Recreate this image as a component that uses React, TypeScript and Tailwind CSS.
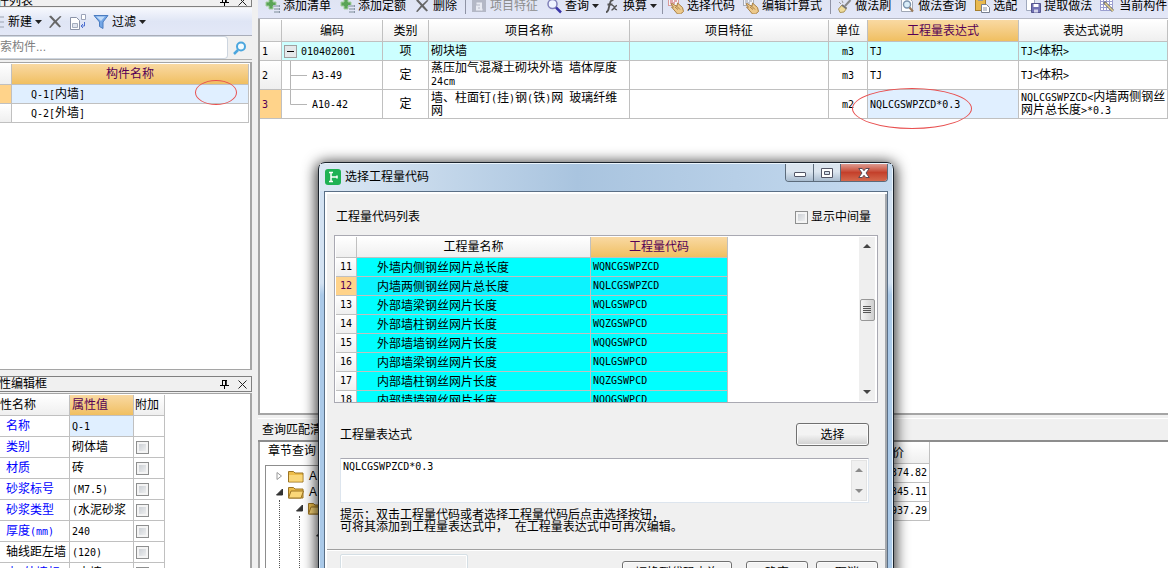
import type { ReactNode } from "react";

const CJK = "font-['Liberation_Sans','Noto_Sans_CJK_SC',sans-serif]";
const MONO = "font-['DejaVu_Sans_Mono',monospace] text-[10px]";
const LINE = "border-[#c0c0c0]";
const HEAD = "bg-gradient-to-b from-white to-[#efefef] font-normal";
const GOLD = "bg-gradient-to-b from-[#f9d9a2] to-[#f0bf60] font-normal text-[#550055]";

const items = [
  { no: "1", code: "010402001", kind: "项", name: "砌块墙", unit: "m3", expr: "TJ", note: "TJ<体积>" },
  { no: "2", code: "A3-49", kind: "定", name: "蒸压加气混凝土砌块外墙 墙体厚度\n24cm", unit: "m3", expr: "TJ", note: "TJ<体积>" },
  {
    no: "3",
    code: "A10-42",
    kind: "定",
    name: "墙、柱面钉(挂)钢(铁)网 玻璃纤维\n网",
    unit: "m2",
    expr: "NQLCGSWPZCD*0.3",
    note: "NQLCGSWPZCD<内墙两侧钢丝\n网片总长度>*0.3",
  },
];

const props = [
  { name: "名称", value: "Q-1", blue: true, check: false },
  { name: "类别", value: "砌体墙", blue: true, check: true },
  { name: "材质", value: "砖", blue: true, check: true },
  { name: "砂浆标号", value: "(M7.5)", blue: true, check: true },
  { name: "砂浆类型", value: "(水泥砂浆", blue: true, check: true },
  { name: "厚度(mm)", value: "240", blue: true, check: true },
  { name: "轴线距左墙", value: "(120)", blue: false, check: true },
  { name: "内/外墙标", value: "(内墙)", blue: true, check: true },
];

const codes = [
  ["11", "外墙内侧钢丝网片总长度", "WQNCGSWPZCD"],
  ["12", "内墙两侧钢丝网片总长度", "NQLCGSWPZCD"],
  ["13", "外部墙梁钢丝网片长度", "WQLGSWPCD"],
  ["14", "外部墙柱钢丝网片长度", "WQZGSWPCD"],
  ["15", "外部墙墙钢丝网片长度", "WQQGSWPCD"],
  ["16", "内部墙梁钢丝网片长度", "NQLGSWPCD"],
  ["17", "内部墙柱钢丝网片长度", "NQZGSWPCD"],
  ["18", "内部墙墙钢丝网片长度", "NQQGSWPCD"],
];

// Half-width runs are set in the fixed-pitch face, the rest in the CJK one
const Mixed = ({ text }: { text: string }) => (
  <span className="whitespace-pre">
    {text.split(/([\x20-\x7e]+)/).map((part, i) =>
      i % 2 ? (
        <span key={i} className={MONO}>
          {part}
        </span>
      ) : (
        part
      )
    )}
  </span>
);

const Icon = ({ children }: { children: ReactNode }) => (
  <svg viewBox="0 0 16 16" className="h-4 w-4 shrink-0" fill="none" aria-hidden="true">
    {children}
  </svg>
);

const AddIcon = () => (
  <Icon>
    <path d="M5 1h4v3h3v4H9v3H5V8H2V4h3z" fill="#5aa457" stroke="#a5cfa0" />
    <path d="M9 8h7M10 11h6M10 14h6" stroke="#8a97a8" strokeWidth="2" />
    <path d="M9 8h6M10 11h5M10 14h5" stroke="#d5dce6" strokeWidth="1" />
  </Icon>
);

const CrossIcon = () => (
  <Icon>
    <path d="M2 2.5l2-1 4.500 4.700L13 2l1.500.5-4.800 5L14 12.500l-1.500 1-4.500-4.600L3.500 14 2 13.500l4.800-6z" fill="#666" />
  </Icon>
);

const FeatureIcon = () => (
  <Icon>
    <rect x="1" y="1" width="14" height="13" fill="#b4b8c6" />
    <path d="M5.500 5.500h4.500v6M10 8.500H6v3h4l1.500.3" stroke="#e9ebf3" strokeWidth="2" />
  </Icon>
);

const SearchIcon = () => (
  <Icon>
    <circle cx="6.500" cy="6" r="4.500" fill="#eef3ff" stroke="#8080b8" strokeWidth="1.500" />
    <path d="M10 9.500l5 5" stroke="#3a36a8" strokeWidth="2.500" />
  </Icon>
);

const FxIcon = () => (
  <Icon>
    <path d="M2 14c2 0 2.500-2 3-5l1-4c.5-2.500 1.500-3 3.500-2.800M3.500 6.500h5" stroke="#555" strokeWidth="1.800" />
    <path d="M8 7.500c1.500-.5 2 .5 2.500 2s1 2.500 2.500 2M13 7.500c-2 0-3.500 4.500-5.500 4.500" stroke="#555" strokeWidth="1.400" />
  </Icon>
);

const HandIcon = ({ red = false }: { red?: boolean }) => (
  <Icon>
    <rect x="0.500" y="0.500" width="10" height="7" fill="#f4f6fb" stroke={red ? "#d99a9a" : "#a7adb9"} />
    <path d="M2 3h3M6 3h3M2 5h5" stroke={red ? "#cc5555" : "#929aaa"} />
    <path d="M4 5.500l5 3 .5-3.500 5 4.500 1 4-3 2.500h-3L3.500 9l2 .2L3 6z" fill="#edc98b" stroke="#a98146" />
    <path d="M7 9l3 2.500M9 8.500l3 3" stroke="#a98146" />
  </Icon>
);

const BrushIcon = () => (
  <Icon>
    <path d="M14.500 2L9 8" stroke="#888" strokeWidth="2" />
    <path d="M3 4l2 2M6 2.500l1 2.500" stroke="#999" />
    <path d="M6 7l4.500 3.500L8 14l-4 .5L2.500 11z" fill="#f0dc9a" stroke="#ab9558" />
    <path d="M6 7l4.500 3.500" stroke="#777" strokeWidth="2" />
  </Icon>
);

const PageSearchIcon = () => (
  <Icon>
    <path d="M2.500.5h8l3 3v10h-11z" fill="#fff" stroke="#a0a7b5" />
    <circle cx="8" cy="6.500" r="3.500" fill="#d9edf8" stroke="#7b93ad" strokeWidth="1.400" />
    <path d="M10.500 9.500l3.500 4" stroke="#9a7a5a" strokeWidth="2" />
  </Icon>
);

const ClipboardIcon = () => (
  <Icon>
    <rect x="1.500" y="1.500" width="10" height="11" fill="#e8b94f" stroke="#a67f2c" />
    <rect x="4" y="0" width="5" height="3" fill="#999" />
    <path d="M7.500 6.500h5l3 3v5h-8z" fill="#fff" stroke="#777f90" />
    <path d="M9 10h4M9 12h4" stroke="#8b93a5" />
  </Icon>
);

const SaveIcon = () => (
  <Icon>
    <path d="M1.500.5h8v12h-8z" fill="#fff" stroke="#a0a9bd" />
    <path d="M6.500 5.500h9v9h-9z" fill="#7373b5" stroke="#55558f" />
    <path d="M8.500 6h5v3h-5z" fill="#fff" />
    <path d="M9 11.500h4v3H9z" fill="#d4d4ea" />
  </Icon>
);

const GridPenIcon = () => (
  <Icon>
    <path d="M.5.5h12v12H.5zM.5 3.500h12M.5 6.500h12M.5 9.500h12M3.500.5v12M6.500.5v12M9.500.5v12" stroke="#9b9fd0" fill="#fff" />
    <path d="M4 4l9 9" stroke="#777" strokeWidth="3" />
    <path d="M5 5l8 8" stroke="#e6d28a" strokeWidth="1.500" />
  </Icon>
);

const FolderIcon = ({ open = false }: { open?: boolean }) => (
  <Icon>
    <path d="M.5 3.500h5l1.500 1.500h8v9H.5z" fill="#edbd4a" stroke="#9b7424" />
    <path d={open ? "M.5 14l2.500-7h12.500L13 14z" : "M1 7h13.500v6.500H1z"} fill="#fad779" stroke={open ? "#9b7424" : "none"} />
  </Icon>
);

const Caret = () => (
  <svg viewBox="0 0 7 4" className="h-1 w-[7px] shrink-0" aria-hidden="true">
    <path d="M0 0h7L3.500 4z" fill="#222" />
  </svg>
);

const Tool = ({ icon, label, menu = false, disabled = false }: { icon: ReactNode; label: string; menu?: boolean; disabled?: boolean }) => (
  <button
    disabled={disabled}
    className={`flex shrink-0 items-center gap-[3px] whitespace-nowrap disabled:text-[#8d8d8d] ${menu ? "mr-[5px]" : "mr-2"}`}
  >
    {icon}
    {label}
    {menu && <Caret />}
  </button>
);

const Separator = () => <span className="mr-[5px] h-4 w-px shrink-0 bg-[#8f93a5]" />;

const PinIcon = () => (
  <svg viewBox="0 0 9 9" className="h-[9px] w-[9px]" fill="none" aria-hidden="true">
    <path d="M2.500 0v5M6 0v5M2 .5h5M0 5.500h9M4.500 6v3" stroke="#000" />
    <path d="M5 1h1.500v4H5z" fill="#000" />
  </svg>
);

const CloseIcon = () => (
  <svg viewBox="0 0 9 9" className="h-[9px] w-[9px]" fill="none" aria-hidden="true">
    <path d="M.5.5l8 8M8.500.5l-8 8" stroke="#222" />
  </svg>
);

const PanelButtons = () => (
  <span className="flex items-center gap-[9px] pr-1">
    <button aria-label="固定">
      <PinIcon />
    </button>
    <button aria-label="关闭">
      <CloseIcon />
    </button>
  </span>
);

const Check = ({ id, label }: { id?: string; label?: string }) => (
  <input
    id={id}
    type="checkbox"
    aria-label={label}
    className="block h-[13px] w-[13px] shrink-0 appearance-none border border-[#8e8f8f] bg-gradient-to-br from-[#c3c8ce] to-[#f7f7f7] shadow-[inset_0_0_0_2px_#f4f4f4]"
  />
);

const ComponentPanel = () => (
  <section>
    <header className="flex h-[7px] items-end justify-between overflow-hidden border-r border-b border-[#808080]">
      <h2 className="-ml-[3px] leading-[9px]">件列表</h2>
      <PanelButtons />
    </header>
    <div className="mt-px flex h-[28px] items-center border-b border-[#a9adb9] bg-gradient-to-b from-[#f6f8fd] via-[#dfe5f5] to-[#e3e8f7]">
      <button className="flex items-center gap-[3px]">
        <svg viewBox="0 0 5 12" className="h-3 w-[5px]" aria-hidden="true">
          <path d="M0 1h4M0 6h4M0 11h4" stroke="#9aa2b0" />
        </svg>
        新建
        <Caret />
      </button>
      <button className="ml-[5px]" aria-label="删除">
        <CrossIcon />
      </button>
      <button className="ml-[7px]" aria-label="复制">
        <Icon>
          <path d="M.5 3.500h6l3 3v9h-9z" fill="#fff" stroke="#8b93a8" />
          <path d="M2.500 9.500h5v4h-5z" fill="#dfe4ee" stroke="#a5adbd" />
          <path d="M11.500.5h4v5h-4z" fill="#fff" stroke="#9ba3b8" />
          <path d="M14.500 8v4h-3M13 10l-2 2 2 2" stroke="#4d6fd0" />
        </Icon>
      </button>
      <button className="ml-[7px] flex items-center gap-[3px]">
        <Icon>
          <path d="M1 1.500h14L10 8v6.500l-3.500-2V8z" fill="#73a6e6" stroke="#4b7cc0" />
          <path d="M3 2.500h9L8 7z" fill="#c3dcf8" />
        </Icon>
        过滤
        <Caret />
      </button>
    </div>
    <div className="flex h-[24px] items-stretch border-b border-[#b0b0b0]">
      <input
        aria-label="搜索构件"
        placeholder="索构件..."
        className="min-w-0 flex-1 rounded-r-sm border border-l-0 border-[#cdd5df] bg-white pb-[2px] text-xs outline-none placeholder:text-[#808080]"
      />
      <button aria-label="搜索" className="flex w-[24px] items-center justify-center">
        <svg viewBox="0 0 14 14" className="h-[14px] w-[14px]" fill="none" aria-hidden="true">
          <circle cx="8" cy="5.500" r="4" fill="#f2fbff" stroke="#4ba6de" strokeWidth="2" />
          <path d="M5 9l-4 4" stroke="#4ba6de" strokeWidth="2.500" />
        </svg>
      </button>
    </div>
    <div className="mt-[2px] h-[308px] border-t border-r-2 border-b border-[#a5a5a5] bg-white pt-px">
      <table className="w-[249px] table-fixed border-separate border-spacing-0">
        <colgroup>
          <col className="w-[12px]" />
          <col />
        </colgroup>
        <thead>
          <tr>
            <th className={`h-[21px] border-r border-b ${LINE} ${HEAD}`} />
            <th className={`border-r border-b p-0 ${LINE} ${GOLD}`}>构件名称</th>
          </tr>
        </thead>
        <tbody>
          <tr>
            <td className={`h-[19px] border-r border-b bg-[#ffd38a] p-0 ${LINE}`} />
            <td className={`relative border-r border-b bg-[#e0efff] p-0 pl-[19px] ${LINE}`}>
              <Mixed text="Q-1[内墙]" />
              <span className="absolute -top-[5px] right-[11px] h-[25px] w-[42px] rounded-[50%] border border-[#e85050]" />
            </td>
          </tr>
          <tr>
            <td className={`h-[19px] border-r border-b p-0 ${LINE} ${HEAD}`} />
            <td className={`border-r border-b p-0 pl-[19px] ${LINE}`}>
              <Mixed text="Q-2[外墙]" />
            </td>
          </tr>
        </tbody>
      </table>
    </div>
  </section>
);

const PropertyPanel = () => (
  <section className="mt-[6px] flex min-h-0 flex-1 flex-col">
    <header className="flex h-[16px] shrink-0 items-center justify-between border border-l-0 border-[#808080]">
      <h2 className="-ml-px leading-[13px]">性编辑框</h2>
      <PanelButtons />
    </header>
    <div className="mt-px min-h-0 flex-1 overflow-hidden border-t border-r-2 border-[#a5a5a5] bg-white pt-px">
      <table className="w-[165px] table-fixed border-separate border-spacing-0">
        <colgroup>
          <col className="w-[70px]" />
          <col className="w-[64px]" />
          <col />
        </colgroup>
        <thead>
          <tr className="text-left">
            <th className={`h-[21px] border-r border-b p-0 ${LINE} ${HEAD}`}>性名称</th>
            <th className={`border-r border-b p-0 pl-[2px] ${LINE} ${GOLD}`}>属性值</th>
            <th className={`border-r border-b p-0 pl-px whitespace-nowrap ${LINE} ${HEAD}`}>附加</th>
          </tr>
        </thead>
        <tbody>
          {props.map((p, i) => (
            <tr key={p.name}>
              <td className={`h-[21px] overflow-hidden border-r border-b p-0 pl-[6px] ${LINE} ${p.blue ? "text-[#0000ff]" : ""}`}>
                <Mixed text={p.name} />
              </td>
              <td className={`overflow-hidden border-r border-b p-0 pl-[2px] ${LINE} ${i === 0 ? "bg-[#e0efff]" : ""}`}>
                <Mixed text={p.value} />
              </td>
              <td className={`border-r border-b p-0 pl-[2px] ${LINE}`}>{p.check && <Check label={p.name} />}</td>
            </tr>
          ))}
        </tbody>
      </table>
    </div>
  </section>
);

const MainToolbar = () => (
  <div className="flex h-[19px] items-center overflow-hidden border-b border-[#b5b8c4] bg-gradient-to-b from-[#dfe4f3] to-[#e3e7f8] pb-[7px] pl-[6px] whitespace-nowrap">
    <Tool icon={<AddIcon />} label="添加清单" />
    <Tool icon={<AddIcon />} label="添加定额" />
    <Tool icon={<CrossIcon />} label="删除" />
    <Separator />
    <Tool icon={<FeatureIcon />} label="项目特征" disabled />
    <Tool icon={<SearchIcon />} label="查询" menu />
    <Tool icon={<FxIcon />} label="换算" menu />
    <Separator />
    <Tool icon={<HandIcon red />} label="选择代码" />
    <Tool icon={<HandIcon />} label="编辑计算式" />
    <Separator />
    <Tool icon={<BrushIcon />} label="做法刷" />
    <Tool icon={<PageSearchIcon />} label="做法查询" />
    <Tool icon={<ClipboardIcon />} label="选配" />
    <Tool icon={<SaveIcon />} label="提取做法" />
    <Tool icon={<GridPenIcon />} label="当前构件" />
  </div>
);

const ItemTable = () => (
  <div className="h-[396px] border-b-2 border-l-2 border-[#a5a5a5] bg-white pt-px">
    <table className="w-full table-fixed border-separate border-spacing-0">
      <colgroup>
        <col className="w-[22px]" />
        <col className="w-[101px]" />
        <col className="w-[46px]" />
        <col className="w-[201px]" />
        <col className="w-[199px]" />
        <col className="w-[39px]" />
        <col className="w-[151px]" />
        <col />
      </colgroup>
      <thead>
        <tr>
          {["", "编码", "类别", "项目名称", "项目特征", "单位", "工程量表达式", "表达式说明"].map((h) => (
            <th key={h} className={`h-[22px] border-r border-b p-0 ${LINE} ${h === "工程量表达式" ? GOLD : HEAD}`}>
              {h}
            </th>
          ))}
        </tr>
      </thead>
      <tbody className="leading-[12px]">
        {items.map((it, i) => {
          const cell = `border-r border-b p-0 ${LINE} ${i === 0 ? "bg-[#ccffff]" : ""}`;
          return (
            <tr key={it.no} className={i === 0 ? "h-[19px]" : "h-[29px]"}>
              <td className={`border-r border-b p-0 pl-[2px] ${LINE} ${i === 2 ? "bg-[#ffd38a] text-[#550055]" : HEAD}`}>
                <Mixed text={it.no} />
              </td>
              <td className={cell}>
                <div className="flex items-center">
                  {i === 0 ? (
                    <button
                      aria-label="折叠"
                      className="mr-1 ml-[2px] flex h-[13px] w-[13px] items-center justify-center border border-[#a0a0a0] bg-[#e4e8ea]"
                    >
                      <span className="h-px w-[7px] bg-black" />
                    </button>
                  ) : (
                    <svg viewBox="0 0 30 28" className="h-[28px] w-[30px]" aria-hidden="true">
                      <path d={i === 1 ? "M8.500 0v28M8.500 14.500H25" : "M8.500 0v14.500H25"} fill="none" stroke="#b5b5b5" />
                    </svg>
                  )}
                  <Mixed text={it.code} />
                </div>
              </td>
              <td className={`text-center ${cell}`}>{it.kind}</td>
              <td className={`pl-[2px]! ${cell}`}>
                <Mixed text={it.name} />
              </td>
              <td className={cell} />
              <td className={`text-center ${cell}`}>
                <Mixed text={it.unit} />
              </td>
              <td className={`relative pl-[2px]! ${cell} ${i === 2 ? "bg-[#e0efff]" : ""}`}>
                <Mixed text={it.expr} />
                {i === 2 && (
                  <span className="absolute -top-[2px] -left-[16px] z-10 h-[41px] w-[120px] rounded-[50%] border border-[#e85050]" />
                )}
              </td>
              <td className={`pl-[2px]! ${cell}`}>
                <Mixed text={it.note} />
              </td>
            </tr>
          );
        })}
      </tbody>
    </table>
  </div>
);

const Twisty = ({ open = false }: { open?: boolean }) => (
  <svg viewBox="0 0 7 8" className="h-2 w-[7px] shrink-0" aria-hidden="true">
    <path d={open ? "M6.500 1v6h-6z" : "M1 .5l4.500 3.500L1 7.500z"} fill={open ? "#333" : "#fff"} stroke={open ? "#333" : "#999"} />
  </svg>
);

const QueryPanel = () => (
  <section className="flex min-h-0 flex-1 flex-col">
    <div className="mt-[3px] flex h-[24px] shrink-0 items-center border-t border-b-2 border-t-white border-b-[#8d8d8d] pl-1">
      查询匹配清单
    </div>
    <div className="flex min-h-0 flex-1 border-l-2 border-[#a5a5a5] bg-white">
      <div className="flex w-[560px] shrink-0 flex-col pl-[5px]">
        <div className="flex h-[23px] shrink-0 items-start pt-px pl-[3px]">章节查询</div>
        <ul className="flex-1 border-t border-l border-[#8d8d8d] pt-[2px] leading-[16px]">
          <li className="flex h-[16px] items-center gap-[5px] pl-[10px]">
            <Twisty />
            <FolderIcon />A 砌筑工程
          </li>
          <li className="flex h-[16px] items-center gap-[5px] pl-[10px]">
            <Twisty open />
            <FolderIcon open />A 建筑工程
          </li>
          <li className="ml-[13px] h-[90px] border-l border-dotted border-[#555] pl-[16px]">
            <div className="flex h-[16px] items-center gap-[5px]">
              <Twisty open />
              <FolderIcon open />
              A.1
            </div>
            <div className="ml-[3px] h-[74px] border-l border-dotted border-[#555] pt-[13px] pl-[16px]">
              <Twisty open />
            </div>
          </li>
        </ul>
      </div>
      <table className="ml-[35px] w-[75px] table-fixed border-separate border-spacing-0 self-start">
        <thead>
          <tr>
            <th className={`h-[22px] border-r border-b p-0 ${LINE} ${HEAD}`}>单价</th>
          </tr>
        </thead>
        <tbody>
          {["374.82", "345.11", "937.29"].map((v) => (
            <tr key={v}>
              <td className={`h-[19px] border-r border-b p-0 pr-[2px] text-right ${LINE} ${MONO}`}>{v}</td>
            </tr>
          ))}
        </tbody>
      </table>
    </div>
  </section>
);

const Arrow = ({ up = false, faint = false }: { up?: boolean; faint?: boolean }) => (
  <svg viewBox="0 0 8 4" className="h-1 w-2" aria-hidden="true">
    <path d={up ? "M0 4h8L4 0z" : "M0 0h8L4 4z"} fill={faint ? "#8b8b8b" : "#444"} />
  </svg>
);

const PushButton = ({ children, className = "" }: { children: ReactNode; className?: string }) => (
  <button
    className={`h-[23px] rounded-[3px] border border-[#707070] bg-gradient-to-b from-[#f3f3f3] from-50% to-[#cfcfcf] shadow-[inset_0_0_0_1px_#fbfbfb] ${className}`}
  >
    {children}
  </button>
);

const CodeDialog = () => (
  <div
    role="dialog"
    aria-label="选择工程量代码"
    className="absolute top-[162px] left-[318px] z-20 w-[576px] rounded-t-[7px] border border-[#1b232c] bg-gradient-to-b from-[#d3e2f2] from-[120px] to-[#aac9e8] to-[132px] px-[5px] pb-2 shadow-[0_2px_14px_2px_rgba(0,0,0,0.8),inset_0_0_0_1px_#eaf4fc]"
  >
    <div className="-mx-1 mt-px flex h-[27px] items-start bg-gradient-to-r from-[#dce8f4] via-[#a9c4df] via-45% to-[#c5daef] pr-[4px] pl-[5px]">
      <svg viewBox="0 0 16 16" className="mt-[5px] h-4 w-4" fill="none" aria-hidden="true">
        <rect width="16" height="16" rx="3" fill="#1fb254" />
        <path d="M4 3.500h4M6 3.500v9M4 12.500h4M6 8h6M12 6.500v3" stroke="#fff" strokeWidth="1.500" />
      </svg>
      <h2 className="mt-[5px] ml-1 flex-1 leading-[16px]">选择工程量代码</h2>
      <div className="flex h-[18px] overflow-hidden rounded-b-[4px] border border-t-0 border-[#5c6b7b]">
        <button aria-label="最小化" className="flex w-[28px] items-end justify-center border-r border-[#5c6b7b] bg-gradient-to-b from-[#dbe5ef] from-45% to-[#a9bccf] pb-1">
          <span className="h-[5px] w-[12px] rounded-[1px] border border-[#535666] bg-white" />
        </button>
        <button aria-label="最大化" className="flex w-[27px] items-center justify-center border-r border-[#5c6b7b] bg-gradient-to-b from-[#dbe5ef] from-45% to-[#a9bccf]">
          <svg viewBox="0 0 12 10" className="h-[10px] w-3" aria-hidden="true">
            <path d="M.5.5h11v9H.5zM3.500 3.500h5v3h-5z" fill="#fff" stroke="#535666" fillRule="evenodd" />
          </svg>
        </button>
        <button aria-label="关闭" className="flex w-[46px] items-center justify-center bg-gradient-to-b from-[#dd9a90] via-[#c4402b] to-[#d4684c]">
          <svg viewBox="0 0 12 10" className="h-[10px] w-3" aria-hidden="true">
            <path d="M.7.5h3.600L6 2.700 7.700.5h3.600L8 5l3.300 4.500H7.700L6 7.300 4.300 9.500H.7L4 5z" fill="#fff" stroke="#5b4a55" />
          </svg>
        </button>
      </div>
    </div>
    <div className="border border-[#5a6f86] bg-[#f0f0f0] shadow-[inset_2px_2px_0_#fff,inset_-2px_0_0_#a5a9ae]">
      <div className="flex items-center justify-between pt-[18px] pr-[16px] pl-[11px] leading-[14px]">
        <span>工程量代码列表</span>
        <label htmlFor="middle" className="flex items-center gap-[3px]">
          <Check id="middle" />
          显示中间量
        </label>
      </div>
      <div className="mt-[11px] mr-[9px] ml-[9px] flex h-[168px] justify-between overflow-hidden border border-[#a9a9b2] bg-white p-px">
        <table className="w-[392px] table-fixed border-separate border-spacing-0 self-start">
          <colgroup>
            <col className="w-[21px]" />
            <col className="w-[234px]" />
            <col />
          </colgroup>
          <thead>
            <tr>
              <th className={`h-[21px] border-r border-b p-0 ${LINE} ${HEAD}`} />
              <th className={`border-r border-b p-0 ${LINE} ${HEAD}`}>工程量名称</th>
              <th className={`border-r border-b p-0 ${LINE} ${GOLD}`}>工程量代码</th>
            </tr>
          </thead>
          <tbody>
            {codes.map(([no, name, code]) => {
              const active = no === "12";
              const fill = active ? "bg-[#0cf3ff]" : "bg-[#00ffff]";
              return (
                <tr key={no}>
                  <td className={`h-[19px] border-r border-b p-0 text-center ${LINE} ${MONO} ${active ? "bg-[#ffd38a] text-[#550055]" : HEAD}`}>{no}</td>
                  <td className={`border-r border-b p-0 pt-px pl-[20px] ${LINE} ${fill}`}>{name}</td>
                  <td className={`border-r border-b p-0 pl-[2px] ${LINE} ${MONO} ${fill}`}>{code}</td>
                </tr>
              );
            })}
          </tbody>
        </table>
        <div className="mr-px flex w-[16px] flex-col items-center justify-between bg-[#efefef] py-[7px]">
          <Arrow up />
          <span className="mt-[32px] flex h-[22px] w-[15px] flex-col items-center justify-center gap-px rounded-[2px] border border-[#979797] bg-gradient-to-r from-[#f5f5f5] to-[#cfcfcf]">
            <span className="h-px w-2 bg-[#555]" />
            <span className="h-px w-2 bg-[#555]" />
            <span className="h-px w-2 bg-[#555]" />
            <span className="h-px w-2 bg-[#555]" />
          </span>
          <span className="h-[32px]" />
          <Arrow />
        </div>
      </div>
      <div className="mt-5 flex items-center justify-between pr-[18px] pl-[15px]">
        <label htmlFor="expr">工程量表达式</label>
        <PushButton className="w-[73px]">选择</PushButton>
      </div>
      <div className="mt-3 mr-[18px] ml-[15px] flex h-[45px] border border-[#dde5ee] border-t-[#a9a9b2] bg-white p-px">
        <textarea
          id="expr"
          defaultValue="NQLCGSWPZCD*0.3"
          className={`min-w-0 flex-1 resize-none overflow-hidden pl-px leading-[14px] outline-none ${MONO}`}
        />
        <div className="flex w-[16px] flex-col items-center justify-between border border-[#e3e3e3] bg-[#f0f0f0] py-[7px]">
          <Arrow up faint />
          <Arrow faint />
        </div>
      </div>
      <p className="mt-[6px] pl-[15px] leading-[12px]">
        提示：双击工程量代码或者选择工程量代码后点击选择按钮，
        <br />
        可将其添加到工程量表达式中，&nbsp; 在工程量表达式中可再次编辑。
      </p>
      <div className="mx-[2px] mt-4 flex items-start border-t border-[#a0a0a0] pl-[13px] shadow-[inset_0_1px_0_#fff]">
        <div className="mt-1 h-[26px] w-[128px] rounded-[2px] border border-[#d5dfe5] shadow-[inset_0_0_0_1px_#fff]" />
        <div className="mt-[11px] mr-[7px] ml-auto flex">
          <PushButton className="mr-[14px] w-[110px]">切换到代码查询</PushButton>
          <PushButton className="mr-2 w-[62px]">确定</PushButton>
          <PushButton className="w-[62px]">取消</PushButton>
        </div>
      </div>
    </div>
  </div>
);

const App = () => (
  <div className={`relative flex h-screen overflow-hidden bg-[#f0f0f0] text-xs leading-[16px] text-black ${CJK}`}>
    <aside className="flex w-[252px] shrink-0 flex-col">
      <ComponentPanel />
      <PropertyPanel />
    </aside>
    <main className="ml-[6px] flex min-w-0 flex-1 flex-col overflow-hidden">
      <MainToolbar />
      <ItemTable />
      <QueryPanel />
    </main>
    <CodeDialog />
  </div>
);

export default App;
